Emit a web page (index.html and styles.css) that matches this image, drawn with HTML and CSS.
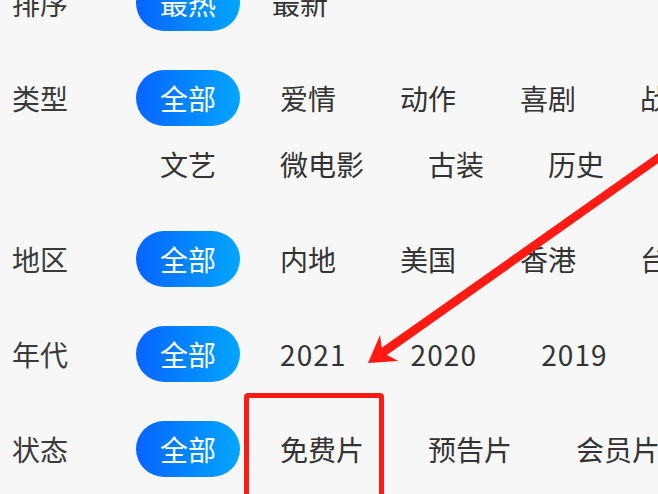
FILE: index.html
```html
<!DOCTYPE html>
<html lang="zh-CN">
<head>
<meta charset="utf-8">
<title>筛选</title>
<link rel="stylesheet" href="styles.css">
</head>
<body>
<div class="page">
  <div class="filters">
    <div class="row">
      <div class="label">排序</div>
      <div class="opts opts-sort">
        <span class="opt active">最热</span>
        <span class="opt">最新</span>
      </div>
    </div>
    <div class="row">
      <div class="label">类型</div>
      <div class="opts">
        <span class="opt active">全部</span>
        <span class="opt">爱情</span>
        <span class="opt">动作</span>
        <span class="opt">喜剧</span>
        <span class="opt">战争</span>
        <span class="opt">科幻</span>
        <span class="opt">悬疑</span>
        <span class="opt">文艺</span>
        <span class="opt">微电影</span>
        <span class="opt">古装</span>
        <span class="opt">历史</span>
        <span class="opt">武侠</span>
      </div>
    </div>
    <div class="row">
      <div class="label">地区</div>
      <div class="opts">
        <span class="opt active">全部</span>
        <span class="opt">内地</span>
        <span class="opt">美国</span>
        <span class="opt">香港</span>
        <span class="opt">台湾</span>
        <span class="opt">韩国</span>
      </div>
    </div>
    <div class="row">
      <div class="label">年代</div>
      <div class="opts">
        <span class="opt active">全部</span>
        <span class="opt num">2021</span>
        <span class="opt num">2020</span>
        <span class="opt num">2019</span>
        <span class="opt num">2018</span>
      </div>
    </div>
    <div class="row">
      <div class="label">状态</div>
      <div class="opts">
        <span class="opt active">全部</span>
        <span class="opt">免费片</span>
        <span class="opt">预告片</span>
        <span class="opt">会员片</span>
      </div>
    </div>
  </div>
  <div class="mark"></div>
  <svg class="arrow" width="1000" height="494" viewBox="0 0 1000 494" aria-hidden="true">
    <polygon fill="#ff1a14" points="368,363 398.5,361.1 386.9,355.1 713.3,124 708.7,117.4 381.7,347.8 380,334.9"/>
  </svg>
</div>
</body>
</html>
```
FILE: styles.css
```css
html, body {
  margin: 0;
  padding: 0;
  overflow: hidden;
  background: #f7f7f7;
}

.page {
  position: relative;
  width: 1000px;
  height: 494px;
  overflow: hidden;
  font-family: "Noto Sans CJK SC", "Noto Sans", sans-serif;
  color: #333;
}

.filters {
  margin-top: -25px;
  padding-left: 12px;
  display: flex;
  flex-direction: column;
  gap: 39px;
}

.row {
  display: flex;
  align-items: flex-start;
}

.label {
  width: 124px;
  flex: none;
  height: 56px;
  line-height: 56px;
  font-size: 28px;
  color: #3a3a3a;
}

.opts {
  flex: 1;
  display: flex;
  flex-wrap: wrap;
  column-gap: 16px;
  row-gap: 10px;
}

.opts-sort {
  column-gap: 8px;
}

.opt {
  height: 56px;
  line-height: 56px;
  padding: 0 24px;
  font-size: 28px;
  color: #333;
  border-radius: 28px;
  white-space: nowrap;
}

.opt.num {
  letter-spacing: 1.1px;
}

.opt.active {
  color: #fff;
  background: linear-gradient(90deg, #0864ff 0%, #01a6ff 100%);
}

.mark {
  position: absolute;
  left: 244px;
  top: 393px;
  width: 140px;
  height: 130px;
  box-sizing: border-box;
  border: 5px solid #ff1a14;
  border-radius: 4px;
}

.arrow {
  position: absolute;
  left: 0;
  top: 0;
  pointer-events: none;
}
```
